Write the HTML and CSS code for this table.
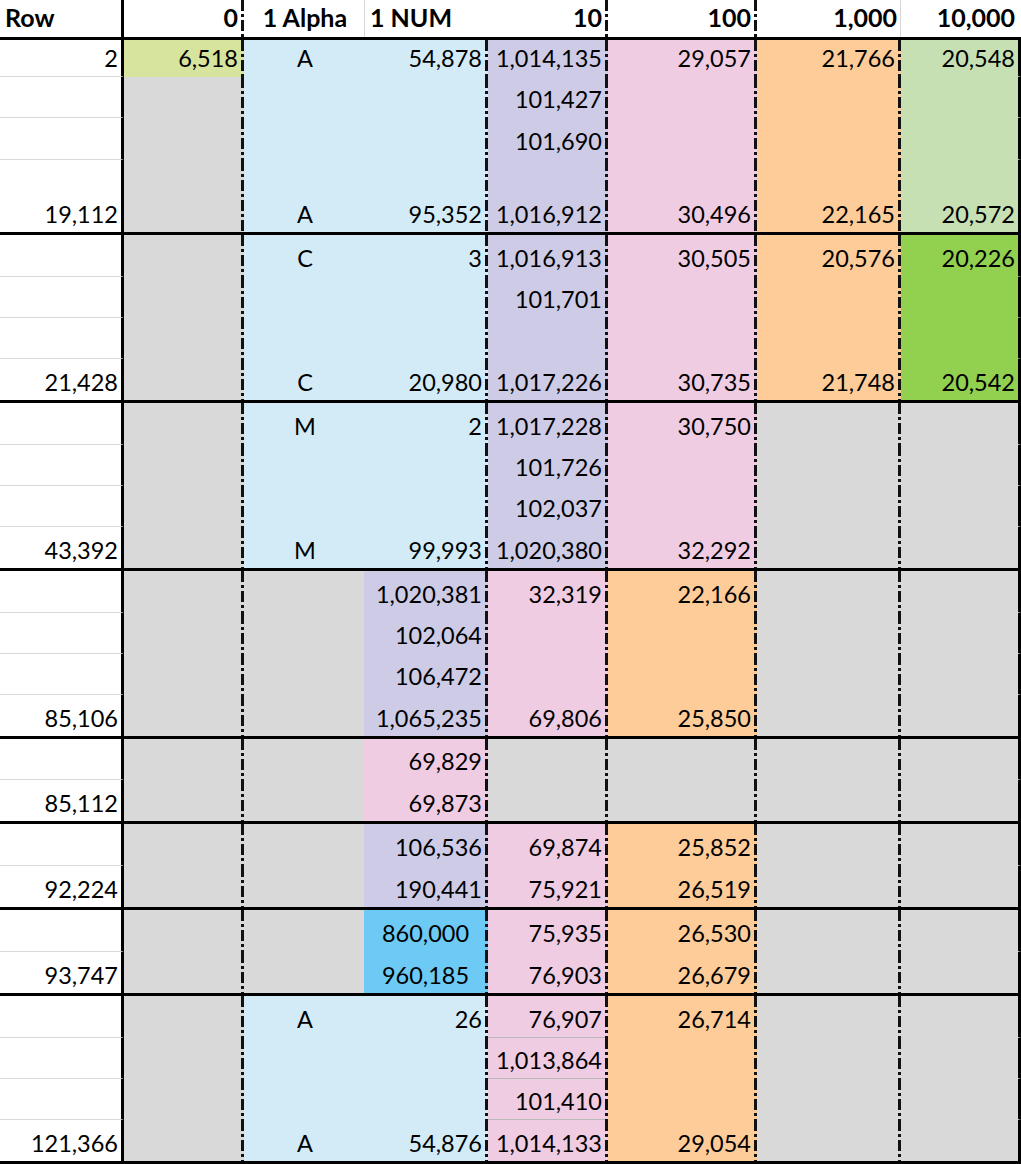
FILE: index.html
```html
<!DOCTYPE html>
<html lang="en">
<head>
<meta charset="utf-8">
<title>Sheet</title>
<link rel="stylesheet" href="styles.css">
</head>
<body>
<div class="sheet">
  <div class="hdr">
    <div class="c lft tk">Row</div>
    <div class="c dd">0</div>
    <div class="c ctr">1 Alpha</div>
    <div class="c lft ll">1 NUM</div>
    <div class="c dd">10</div>
    <div class="c dd">100</div>
    <div class="c rl">1,000</div>
    <div class="c end">10,000</div>
  </div>

  <div class="grp g4 first">
    <div class="c">2</div><div class="c lg">6,518</div><div class="c bl">A</div><div class="c bl">54,878</div><div class="c lv">1,014,135</div><div class="c pk">29,057</div><div class="c or">21,766</div><div class="c gr">20,548</div>
    <div class="c"></div><div class="c g"></div><div class="c bl"></div><div class="c bl"></div><div class="c lv">101,427</div><div class="c pk"></div><div class="c or"></div><div class="c gr"></div>
    <div class="c"></div><div class="c g"></div><div class="c bl"></div><div class="c bl"></div><div class="c lv">101,690</div><div class="c pk"></div><div class="c or"></div><div class="c gr"></div>
    <div class="c">19,112</div><div class="c g"></div><div class="c bl">A</div><div class="c bl">95,352</div><div class="c lv">1,016,912</div><div class="c pk">30,496</div><div class="c or">22,165</div><div class="c gr">20,572</div>
  </div>

  <div class="grp g4">
    <div class="c"></div><div class="c g"></div><div class="c bl">C</div><div class="c bl">3</div><div class="c lv">1,016,913</div><div class="c pk">30,505</div><div class="c or">20,576</div><div class="c bg">20,226</div>
    <div class="c"></div><div class="c g"></div><div class="c bl"></div><div class="c bl"></div><div class="c lv">101,701</div><div class="c pk"></div><div class="c or"></div><div class="c bg"></div>
    <div class="c"></div><div class="c g"></div><div class="c bl"></div><div class="c bl"></div><div class="c lv"></div><div class="c pk"></div><div class="c or"></div><div class="c bg"></div>
    <div class="c">21,428</div><div class="c g"></div><div class="c bl">C</div><div class="c bl">20,980</div><div class="c lv">1,017,226</div><div class="c pk">30,735</div><div class="c or">21,748</div><div class="c bg">20,542</div>
  </div>

  <div class="grp g4">
    <div class="c"></div><div class="c g"></div><div class="c bl">M</div><div class="c bl">2</div><div class="c lv">1,017,228</div><div class="c pk">30,750</div><div class="c g"></div><div class="c g"></div>
    <div class="c"></div><div class="c g"></div><div class="c bl"></div><div class="c bl"></div><div class="c lv">101,726</div><div class="c pk"></div><div class="c g"></div><div class="c g"></div>
    <div class="c"></div><div class="c g"></div><div class="c bl"></div><div class="c bl"></div><div class="c lv">102,037</div><div class="c pk"></div><div class="c g"></div><div class="c g"></div>
    <div class="c">43,392</div><div class="c g"></div><div class="c bl">M</div><div class="c bl">99,993</div><div class="c lv">1,020,380</div><div class="c pk">32,292</div><div class="c g"></div><div class="c g"></div>
  </div>

  <div class="grp g4">
    <div class="c"></div><div class="c g"></div><div class="c g"></div><div class="c lv">1,020,381</div><div class="c pk">32,319</div><div class="c or">22,166</div><div class="c g"></div><div class="c g"></div>
    <div class="c"></div><div class="c g"></div><div class="c g"></div><div class="c lv">102,064</div><div class="c pk"></div><div class="c or"></div><div class="c g"></div><div class="c g"></div>
    <div class="c"></div><div class="c g"></div><div class="c g"></div><div class="c lv">106,472</div><div class="c pk"></div><div class="c or"></div><div class="c g"></div><div class="c g"></div>
    <div class="c">85,106</div><div class="c g"></div><div class="c g"></div><div class="c lv">1,065,235</div><div class="c pk">69,806</div><div class="c or">25,850</div><div class="c g"></div><div class="c g"></div>
  </div>

  <div class="grp g2 g2a">
    <div class="c"></div><div class="c g"></div><div class="c g"></div><div class="c pk">69,829</div><div class="c g"></div><div class="c g"></div><div class="c g"></div><div class="c g"></div>
    <div class="c">85,112</div><div class="c g"></div><div class="c g"></div><div class="c pk">69,873</div><div class="c g"></div><div class="c g"></div><div class="c g"></div><div class="c g"></div>
  </div>

  <div class="grp g2">
    <div class="c"></div><div class="c g"></div><div class="c g"></div><div class="c lv">106,536</div><div class="c pk">69,874</div><div class="c or">25,852</div><div class="c g"></div><div class="c g"></div>
    <div class="c">92,224</div><div class="c g"></div><div class="c g"></div><div class="c lv">190,441</div><div class="c pk">75,921</div><div class="c or">26,519</div><div class="c g"></div><div class="c g"></div>
  </div>

  <div class="grp g2">
    <div class="c"></div><div class="c g"></div><div class="c g"></div><div class="c sb ctr">860,000</div><div class="c pk">75,935</div><div class="c or">26,530</div><div class="c g"></div><div class="c g"></div>
    <div class="c">93,747</div><div class="c g"></div><div class="c g"></div><div class="c sb ctr">960,185</div><div class="c pk">76,903</div><div class="c or">26,679</div><div class="c g"></div><div class="c g"></div>
  </div>

  <div class="grp g4">
    <div class="c"></div><div class="c g"></div><div class="c bl">A</div><div class="c bl">26</div><div class="c pk ln">76,907</div><div class="c or">26,714</div><div class="c g"></div><div class="c g"></div>
    <div class="c"></div><div class="c g"></div><div class="c bl"></div><div class="c bl"></div><div class="c pk ln">1,013,864</div><div class="c or"></div><div class="c g"></div><div class="c g"></div>
    <div class="c"></div><div class="c g"></div><div class="c bl"></div><div class="c bl"></div><div class="c pk ln">101,410</div><div class="c or"></div><div class="c g"></div><div class="c g"></div>
    <div class="c">121,366</div><div class="c g"></div><div class="c bl">A</div><div class="c bl">54,876</div><div class="c pk">1,014,133</div><div class="c or">29,054</div><div class="c g"></div><div class="c g"></div>
  </div>
</div>
</body>
</html>
```

FILE: styles.css
```css
html, body {
  margin: 0;
  padding: 0;
  background: #fff;
}

body {
  font-family: Lato, "Liberation Sans", sans-serif;
  font-size: 23.5px;
  color: #000;
}

.sheet {
  width: 1021px;
}

.hdr,
.grp {
  display: grid;
  grid-template-columns: 124px 120px 120px 124px 120px 149px 144px 120px;
  border-bottom: 3px solid #000;
}

.hdr {
  grid-template-rows: 37px;
  font-weight: 700;
  font-size: 25px;
}

.g4 {
  grid-template-rows: 42px 41px 41px 41px;
}

.g4.first {
  grid-template-rows: 37px 41px 42px 72px;
}

.g2 {
  grid-template-rows: 42px 41px;
}

.g2.g2a {
  grid-template-rows: 41px 41px;
}

.c {
  display: flex;
  align-items: flex-end;
  justify-content: flex-end;
  box-sizing: border-box;
  min-width: 0;
  padding: 0 3px 6px 5px;
  line-height: 1;
  white-space: nowrap;
  border-bottom: 1px solid transparent;
}

.hdr > .c {
  border-bottom: 0;
  padding-bottom: 7px;
}

.g4 > .c:nth-child(n+25),
.g2 > .c:nth-child(n+9) {
  border-bottom-width: 0;
}

.lft { justify-content: flex-start; }
.ctr { justify-content: center; }

/* column borders in the body */
.grp > .c:nth-child(8n+1) {
  border-right: 3px solid #000;
  border-bottom-color: #d9d9d9;
}

.grp > .c:nth-child(8n) {
  border-right: 3px solid #000;
}

.grp > .c:nth-child(8n+3) {
  justify-content: center;
}

.grp > .c:nth-child(8n+2),
.grp > .c:nth-child(8n+4),
.grp > .c:nth-child(8n+5),
.grp > .c:nth-child(8n+6),
.grp > .c:nth-child(8n+7),
.hdr > .dd {
  border-right: 3px solid #000;
  border-image: repeating-linear-gradient(to bottom, #111 0 11px, transparent 11px 14px, #111 14px 17px, transparent 17px 20px) 0 3 0 0 / 0 3px 0 0;
}

/* header borders */
.hdr > .tk { border-right: 3px solid #000; }
.hdr > .ll { border-left: 1px solid #d6d6d6; }
.hdr > .rl { border-right: 1px solid #d6d6d6; }
.hdr > .end { border-right: 3px solid transparent; }

/* fills */
.g  { background-color: #d9d9d9; }
.lg { background-color: #d6e49e; }
.bl { background-color: #d3ebf6; }
.lv { background-color: #cecbe7; }
.pk { background-color: #f0cce3; }
.or { background-color: #fecc99; }
.gr { background-color: #c6e0b4; }
.bg { background-color: #92d050; }
.sb { background-color: #6ccaf4; }

.pk.ln {
  background-image: linear-gradient(#b9b9b9, #b9b9b9);
  background-origin: border-box;
  background-position: left bottom;
  background-size: 100% 1px;
  background-repeat: no-repeat;
}
```
